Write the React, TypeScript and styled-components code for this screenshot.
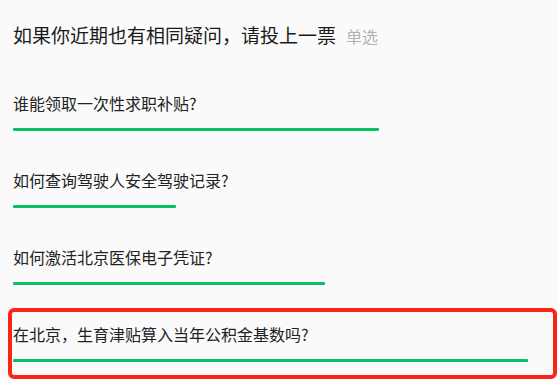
import React from 'react';
import styled, { createGlobalStyle } from 'styled-components';

interface PollOption {
  title: string;
  barWidth: number; // px, length of the vote bar
  highlighted?: boolean;
}

const OPTIONS: PollOption[] = [
  { title: '谁能领取一次性求职补贴?', barWidth: 366 },
  { title: '如何查询驾驶人安全驾驶记录?', barWidth: 163 },
  { title: '如何激活北京医保电子凭证?', barWidth: 312 },
  { title: '在北京，生育津贴算入当年公积金基数吗?', barWidth: 515, highlighted: true },
];

const GlobalStyle = createGlobalStyle`
  html, body {
    margin: 0;
    padding: 0;
    background: #fafafa;
  }
  body {
    font-family: "Noto Sans CJK SC", "Noto Sans", sans-serif;
    -webkit-font-smoothing: antialiased;
  }
`;

const Page = styled.div`
  width: 558px;
  height: 379px;
  box-sizing: border-box;
  padding: 23px 5px 0 12px;
  overflow: hidden;
`;

const Header = styled.div`
  display: flex;
  align-items: baseline;
  gap: 10px;
  padding-left: 1px;
  margin-bottom: 33px;
`;

const Title = styled.h2`
  margin: 0;
  font-size: 19px;
  line-height: 24px;
  font-weight: 400;
  color: #1a1a1a;
`;

const Tag = styled.span`
  font-size: 16px;
  line-height: 24px;
  color: #b2b2b2;
`;

const OptionList = styled.div`
  display: flex;
  flex-direction: column;
  gap: 14px;
`;

const Option = styled.div<{ $highlighted?: boolean }>`
  padding: 11px 0 13px 1px;
  border-radius: 2px;
  outline: ${(p) => (p.$highlighted ? '4px solid #fb2419' : 'none')};
`;

const OptionText = styled.div`
  font-size: 16px;
  line-height: 22px;
  color: #222222;
`;

const VoteBar = styled.div`
  height: 3px;
  margin-top: 14px;
  background: #07c160;
  border-radius: 1px;
`;

export default function App() {
  return (
    <>
      <GlobalStyle />
      <Page>
        <Header>
          <Title>如果你近期也有相同疑问，请投上一票</Title>
          <Tag>单选</Tag>
        </Header>
        <OptionList>
          {OPTIONS.map((opt) => (
            <Option key={opt.title} $highlighted={opt.highlighted}>
              <OptionText>{opt.title}</OptionText>
              <VoteBar style={{ width: opt.barWidth }} />
            </Option>
          ))}
        </OptionList>
      </Page>
    </>
  );
}
